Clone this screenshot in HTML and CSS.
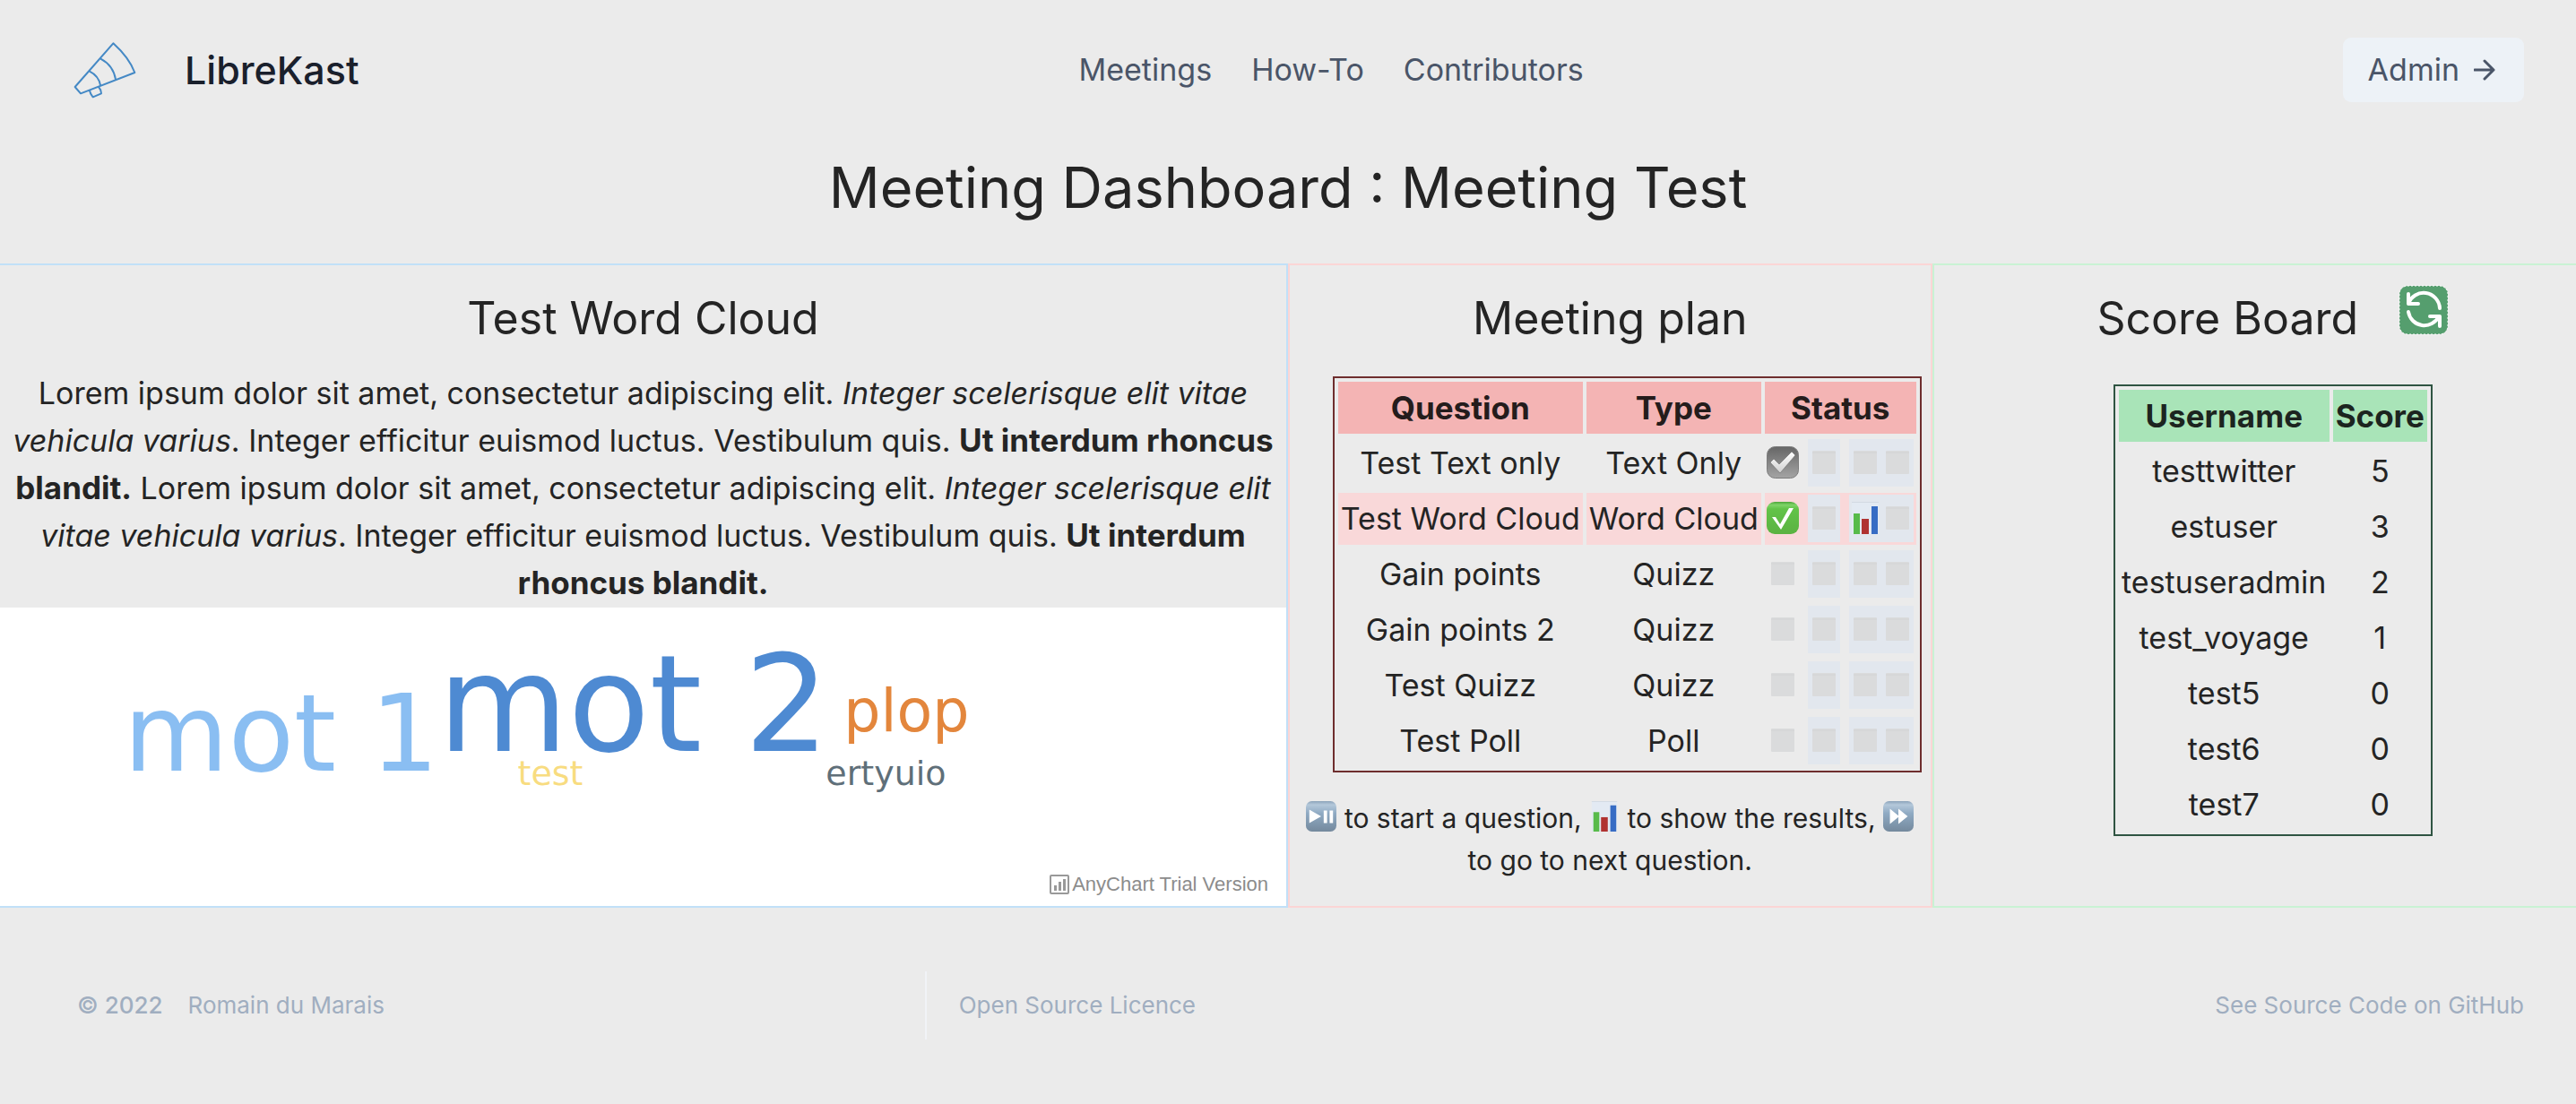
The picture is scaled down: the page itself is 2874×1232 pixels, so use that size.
FILE: index.html
```html
<!DOCTYPE html>
<html lang="en">
<head>
<meta charset="utf-8">
<title>LibreKast</title>
<link rel="stylesheet" href="styles.css">
</head>
<body>
<svg class="sprite" aria-hidden="true">
  <defs>
    <linearGradient id="grey" x1="0" y1="0" x2="0" y2="1"><stop offset="0" stop-color="#666"/><stop offset="1" stop-color="#a4a4a4"/></linearGradient>
    <linearGradient id="silver" x1="0" y1="0" x2="0" y2="1"><stop offset="0" stop-color="#fff"/><stop offset="1" stop-color="#d0d0d0"/></linearGradient>
    <linearGradient id="green" x1="0" y1="0" x2="0" y2="1"><stop offset="0" stop-color="#4da63a"/><stop offset=".1" stop-color="#7fd468"/><stop offset=".22" stop-color="#62c349"/><stop offset="1" stop-color="#5ab241"/></linearGradient>
    <linearGradient id="steel" x1="0" y1="0" x2="0" y2="1"><stop offset="0" stop-color="#8ba3ba"/><stop offset=".12" stop-color="#b4c8da"/><stop offset=".4" stop-color="#8faac3"/><stop offset="1" stop-color="#74899d"/></linearGradient>
    <symbol id="check-grey" viewBox="0 0 36 36"><rect x="0.5" y="0.5" width="35" height="35" rx="9" fill="url(#grey)" stroke="#7c7c7c"/><path d="M4 18l4-4 6 6L28 6l4 4L15 30z" fill="url(#silver)" stroke="#6a6a6a" stroke-width=".6"/></symbol>
    <symbol id="check-green" viewBox="0 0 36 36"><rect width="36" height="36" rx="9" fill="url(#green)"/><path d="M6 17h4l5 8L25 7h5L16 31z" fill="#fff"/></symbol>
    <symbol id="empty" viewBox="0 0 36 36"><rect x="5" y="5" width="26" height="26" rx="1" fill="#dadbdc"/><path d="M5 7h26" stroke="#d2d3d4"/></symbol>
    <symbol id="chart" viewBox="0 0 36 36"><rect x="3" width="30" height="36" fill="#e3eaf3"/><path d="M3 .5h30" stroke="#d2d9e2"/><path d="M5 13h7v23H5z" fill="#58bb4a"/><path d="M14 19h8v17h-8z" fill="#b03231"/><path d="M25 5h7v31h-7z" fill="#376cc4"/></symbol>
    <symbol id="play-pause" viewBox="0 0 36 36"><rect width="36" height="36" rx="7" fill="url(#steel)"/><path d="M4 10l14 8-14 8zM21 11h4v15h-4zM28 11h4v15h-4z" fill="#fff"/></symbol>
    <symbol id="forward" viewBox="0 0 36 36"><rect width="36" height="36" rx="7" fill="url(#steel)"/><path d="M8 9l11 9-11 9zM18 9l11 9-11 9z" fill="#fff"/></symbol>
  </defs>
</svg>

<header class="header">
  <a class="brand" href="#">
    <svg class="brand-logo" viewBox="0 0 222 198" aria-hidden="true">
      <path d="M139 10Q192 58 211 108L30 178L11 156ZM97 62Q139 84 147 131M60 104Q90 119 96 150M60 168Q62 180 71 190L99 178Q99 166 90 156"/>
    </svg>
    <span>LibreKast</span>
  </a>
  <nav class="nav">
    <a href="#">Meetings</a>
    <a href="#">How-To</a>
    <a href="#">Contributors</a>
  </nav>
  <button class="admin" type="button">Admin
    <svg viewBox="0 0 24 24" aria-hidden="true"><path d="M1 12h21M12 2l10 10-10 10"/></svg>
  </button>
</header>

<main>
  <h1>Meeting Dashboard : Meeting Test</h1>
  <div class="board">
    <section class="panel panel-question">
      <h2>Test Word Cloud</h2>
      <p class="text">Lorem ipsum dolor sit amet, consectetur adipiscing elit. <em>Integer scelerisque elit vitae vehicula varius</em>. Integer efficitur euismod luctus. Vestibulum quis. <strong>Ut interdum rhoncus blandit.</strong> Lorem ipsum dolor sit amet, consectetur adipiscing elit. <em>Integer scelerisque elit vitae vehicula varius</em>. Integer efficitur euismod luctus. Vestibulum quis. <strong>Ut interdum rhoncus blandit.</strong></p>
      <div class="cloud">
        <svg class="cloud-words" viewBox="0 0 1436 333">
          <text class="word-1" x="138" y="182">mot 1</text>
          <text class="word-2" x="489" y="160">mot 2</text>
          <text class="word-3" x="942" y="138">plop</text>
          <text class="word-4" x="578" y="198">test</text>
          <text class="word-5" x="922" y="198">ertyuio</text>
        </svg>
        <a class="credit" href="#">
          <svg viewBox="0 0 22 22" aria-hidden="true"><rect x="1" y="1" width="20" height="20" rx="1" fill="none" stroke="#999" stroke-width="2"/><path d="M5 12h3v6H5zM10 8h3v10h-3zM15 5h3v13h-3z" fill="#999"/></svg>
          AnyChart Trial Version
        </a>
      </div>
    </section>

    <section class="panel panel-plan">
      <h2>Meeting plan</h2>
      <div class="plan-wrap">
        <table class="grid plan">
          <thead><tr><th class="col-question">Question</th><th class="col-type">Type</th><th class="col-status">Status</th></tr></thead>
          <tbody>
            <tr><td>Test Text only</td><td>Text Only</td><td><div class="status"><svg class="icon"><use href="#check-grey"/></svg><button type="button" aria-label="Start"><svg class="icon"><use href="#empty"/></svg></button><span class="pair"><button type="button" aria-label="Results"><svg class="icon"><use href="#empty"/></svg></button><button type="button" aria-label="Next"><svg class="icon"><use href="#empty"/></svg></button></span></div></td></tr>
            <tr class="current"><td>Test Word Cloud</td><td>Word Cloud</td><td><div class="status"><svg class="icon"><use href="#check-green"/></svg><button type="button" aria-label="Start"><svg class="icon"><use href="#empty"/></svg></button><span class="pair"><button type="button" aria-label="Results"><svg class="icon"><use href="#chart"/></svg></button><button type="button" aria-label="Next"><svg class="icon"><use href="#empty"/></svg></button></span></div></td></tr>
            <tr><td>Gain points</td><td>Quizz</td><td><div class="status"><svg class="icon"><use href="#empty"/></svg><button type="button" aria-label="Start"><svg class="icon"><use href="#empty"/></svg></button><span class="pair"><button type="button" aria-label="Results"><svg class="icon"><use href="#empty"/></svg></button><button type="button" aria-label="Next"><svg class="icon"><use href="#empty"/></svg></button></span></div></td></tr>
            <tr><td>Gain points 2</td><td>Quizz</td><td><div class="status"><svg class="icon"><use href="#empty"/></svg><button type="button" aria-label="Start"><svg class="icon"><use href="#empty"/></svg></button><span class="pair"><button type="button" aria-label="Results"><svg class="icon"><use href="#empty"/></svg></button><button type="button" aria-label="Next"><svg class="icon"><use href="#empty"/></svg></button></span></div></td></tr>
            <tr><td>Test Quizz</td><td>Quizz</td><td><div class="status"><svg class="icon"><use href="#empty"/></svg><button type="button" aria-label="Start"><svg class="icon"><use href="#empty"/></svg></button><span class="pair"><button type="button" aria-label="Results"><svg class="icon"><use href="#empty"/></svg></button><button type="button" aria-label="Next"><svg class="icon"><use href="#empty"/></svg></button></span></div></td></tr>
            <tr><td>Test Poll</td><td>Poll</td><td><div class="status"><svg class="icon"><use href="#empty"/></svg><button type="button" aria-label="Start"><svg class="icon"><use href="#empty"/></svg></button><span class="pair"><button type="button" aria-label="Results"><svg class="icon"><use href="#empty"/></svg></button><button type="button" aria-label="Next"><svg class="icon"><use href="#empty"/></svg></button></span></div></td></tr>
          </tbody>
        </table>
      </div>
      <p class="legend"><svg class="glyph"><use href="#play-pause"/></svg> to start a question, <svg class="glyph"><use href="#chart"/></svg> to show the results, <svg class="glyph"><use href="#forward"/></svg> to go to next question.</p>
    </section>

    <section class="panel panel-score">
      <div class="score-head">
        <h2>Score Board</h2>
        <button class="refresh" type="button" aria-label="Refresh scores">
          <svg viewBox="0 0 56 56" aria-hidden="true"><rect x="1" y="1" width="54" height="54" rx="9" fill="#559e6e" stroke="#fff" stroke-dasharray="2 2"/><g fill="none" stroke="#fff" stroke-width="4" stroke-linecap="round" stroke-linejoin="round"><path d="M46 26A18 18 0 0 0 11 21M11 10v11h11M11 30A18 18 0 0 0 45 35M46 46V35H35"/></g></svg>
        </button>
      </div>
      <table class="grid score">
        <thead><tr><th class="col-user">Username</th><th class="col-score">Score</th></tr></thead>
        <tbody>
          <tr><td>testtwitter</td><td>5</td></tr>
          <tr><td>estuser</td><td>3</td></tr>
          <tr><td>testuseradmin</td><td>2</td></tr>
          <tr><td>test_voyage</td><td>1</td></tr>
          <tr><td>test5</td><td>0</td></tr>
          <tr><td>test6</td><td>0</td></tr>
          <tr><td>test7</td><td>0</td></tr>
        </tbody>
      </table>
    </section>
  </div>
</main>

<footer class="footer">
  <div class="footer-owner"><span class="year">© 2022</span><a href="#">Romain du Marais</a></div>
  <div class="footer-links"><a href="#">Open Source Licence</a><a href="#">See Source Code on GitHub</a></div>
</footer>
</body>
</html>
```

FILE: styles.css
```css
* { box-sizing: border-box; margin: 0; padding: 0; }

body {
  background: #ebebeb;
  color: #242424;
  font: 34px/54px Inter, "Liberation Sans", sans-serif;
}

a { color: inherit; text-decoration: none; }
button { border: 0; font: inherit; color: inherit; }
.sprite { position: absolute; width: 0; height: 0; }

.header {
  display: flex;
  justify-content: space-between;
  align-items: center;
  padding: 42px 58px 44px 80px;
  color: #4a5568;
}
.brand {
  display: flex;
  align-items: center;
  gap: 52px;
  color: #1a202c;
  font-size: 43px;
  font-weight: 500;
}
.brand-logo { width: 74px; height: 66px; fill: none; stroke: #4589c5; stroke-width: 6; stroke-linejoin: round; }
.nav { display: flex; gap: 44px; }
.admin {
  display: flex;
  align-items: center;
  gap: 16px;
  height: 72px;
  margin-left: 44px;
  padding: 0 32px 0 28px;
  border-radius: 9px;
  background: #edf2f7;
}
.admin svg { width: 24px; height: 24px; fill: none; stroke: #4a5568; stroke-width: 3; stroke-linecap: round; stroke-linejoin: round; }

h1 { font-size: 63px; line-height: 102px; font-weight: 400; text-align: center; }
h2 { font-size: 50px; line-height: 82px; font-weight: 400; text-align: center; }

.board { display: grid; grid-template-columns: 2fr 1fr 1fr; margin-top: 34px; }
.panel { min-width: 0; border: 2px solid; padding-top: 18px; }
.panel-question { border-color: #c1e0f8; border-left: 0; }
.panel-plan { border-color: #fbd5d5; }
.panel-score { padding-left: 40px; border-color: #c9f2d4; border-right: 0; }

.text { padding: 16px 4px 1px; line-height: 53px; text-align: center; }
.text strong { font-size: 35px; font-weight: 700; line-height: 1; }
.cloud { position: relative; background: #fff; }
.cloud-words { display: block; width: 100%; height: auto; font-family: Verdana, "DejaVu Sans", sans-serif; }
.word-1 { font-size: 120px; fill: #8abef2; }
.word-2 { font-size: 149px; fill: #4e8ad2; }
.word-3 { font-size: 65px; fill: #e3863c; }
.word-4 { font-size: 38px; fill: #f8dc80; }
.word-5 { font-size: 38px; fill: #5f6f79; }
.credit {
  position: absolute;
  right: 20px;
  bottom: 12px;
  display: flex;
  align-items: center;
  gap: 3px;
  color: #8c8c8c;
  font: 22px/24px "Liberation Sans", Arial, sans-serif;
}
.credit svg { width: 22px; height: 22px; }

.grid { margin: 0 auto; border-spacing: 4px; border: 2px solid; text-align: center; white-space: nowrap; }
.grid th, .grid td { padding: 2px; }
.grid th { font-size: 35px; font-weight: 700; }
.plan-wrap { padding-left: 38px; }
.plan { margin-top: 24px; border-color: #6e2e2e; }
.plan th { background: #f4b4b4; color: #241c1c; }
.plan .current td { background: #f9d8d9; }
.col-question { width: 273px; }
.col-type { width: 195px; }
.col-status { width: 169px; }
.score { margin-top: 33px; border-color: #2f5442; }
.score th { background: #a9e4b8; color: #1c241f; }
.col-user { width: 235px; }
.col-score { width: 105px; }

.status { display: flex; align-items: flex-start; gap: 10px; height: 54px; }
.icon { display: block; width: 36px; height: 36px; margin-top: 8px; }
.status button { display: block; height: 53px; background: #e2e7ee; }
.status button .icon { margin: 0 0 2px; }
.pair { display: flex; }

.legend { margin-top: 28px; padding: 0 16px; font-size: 30px; line-height: 47px; text-align: center; }
.glyph { width: 34px; height: 34px; vertical-align: -4px; }

.score-head { display: flex; justify-content: center; align-items: flex-start; gap: 45px; }
.refresh { height: 56px; margin-top: 4px; background: none; }
.refresh svg { display: block; width: 56px; height: 56px; }

.footer {
  display: grid;
  grid-template-columns: 53fr 100fr;
  margin-top: 71px;
  padding: 0 58px 0 86px;
  color: #a0aec0;
  font-size: 26px;
}
.footer-owner { display: flex; align-items: center; gap: 28px; height: 76px; }
.year { font-weight: 500; }
.footer-links { display: flex; align-items: center; justify-content: space-between; padding-left: 36px; border-left: 2px solid #f1f3f7; }
```
